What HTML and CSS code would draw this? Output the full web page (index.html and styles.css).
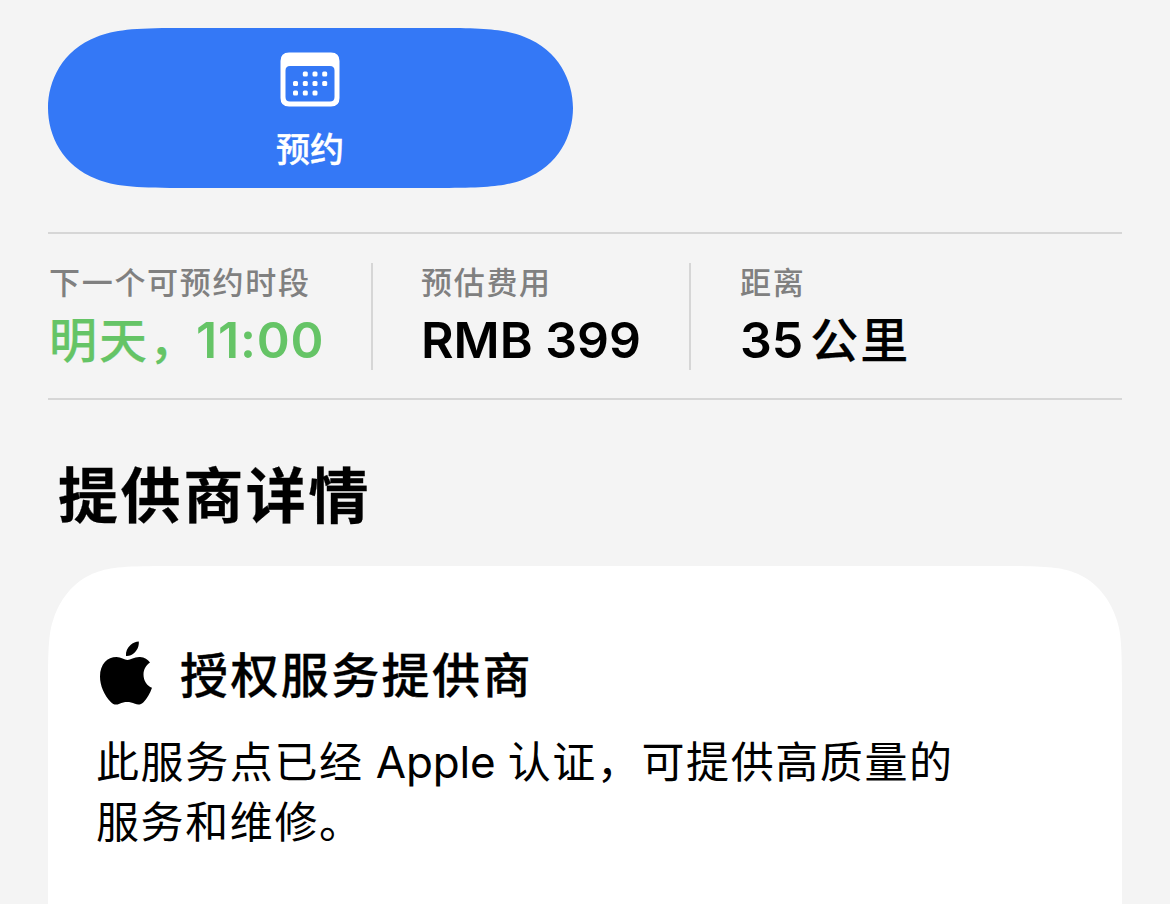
FILE: index.html
```html
<!DOCTYPE html>
<html lang="zh-CN">
<head>
  <meta charset="UTF-8">
  <meta name="viewport" content="width=device-width, initial-scale=1.0">
  <title>授权服务提供商</title>
  <link rel="stylesheet" href="styles.css">
</head>
<body>

  <main class="container">
    <button type="button" class="btn">
      <svg class="calendar-icon" width="60" height="56" viewBox="0 0 60 56">
        <path fill="#fff" fill-rule="evenodd" d="M9 0.5H51Q59.5 0.5 59.5 9V46Q59.5 54.5 51 54.5H9Q0.5 54.5 0.5 46V9Q0.5 0.5 9 0.5ZM10 14Q5.5 14 5.5 18.5V45Q5.5 49.5 10 49.5H50Q54.500 49.5 54.500 45V18.5Q54.500 14 50 14Z"/>
        <g fill="#fff">
          <rect x="22.800" y="19.500" width="5" height="5" rx="1.500"/>
          <rect x="32.500" y="19.500" width="5" height="5" rx="1.500"/>
          <rect x="42.200" y="19.500" width="5" height="5" rx="1.500"/>
          <rect x="13" y="29" width="5" height="5" rx="1.500"/>
          <rect x="22.800" y="29" width="5" height="5" rx="1.500"/>
          <rect x="32.500" y="29" width="5" height="5" rx="1.500"/>
          <rect x="42.200" y="29" width="5" height="5" rx="1.500"/>
          <rect x="13" y="38.500" width="5" height="5" rx="1.500"/>
          <rect x="22.800" y="38.500" width="5" height="5" rx="1.500"/>
          <rect x="32.500" y="38.500" width="5" height="5" rx="1.500"/>
        </g>
      </svg>
      <span>预约</span>
    </button>

    <section class="info">
      <div class="info-item">
        <p class="info-label">下一个可预约时段</p>
        <p class="info-value available">明天<span class="comma">，</span><span class="latin time">11:00</span></p>
      </div>
      <div class="info-item">
        <p class="info-label">预估费用</p>
        <p class="info-value"><span class="latin">RMB 399</span></p>
      </div>
      <div class="info-item">
        <p class="info-label">距离</p>
        <p class="info-value"><span class="latin distance">35</span>公里</p>
      </div>
    </section>

    <h2>提供商详情</h2>

    <section class="card">
      <div class="card-title">
        <svg class="apple-logo" width="54" height="64" viewBox="0 0 54 64">
          <path d="M38.800 0.500C39.200 5.500 37 9.500 34.200 12C31.800 14.200 29 15.300 26 15C25.500 10.500 27.500 6.800 30.500 4C32.800 1.900 36 0.600 38.800 0.500Z"/>
          <path d="M50 21.500C46.200 24.200 43.500 28.200 43.500 33.500C43.500 40 47 44.700 52 46.800C50 52.500 47 57.500 43.500 61.200C41 63.700 38 64 35 62.800C29.500 60.300 24.500 60.500 19.500 62.700C16 64.200 13.500 63.800 11 61.200C4 54 0 44.500 0 35.500C0 23 7.500 16 16.500 16C21 16 24.500 18.900 27.500 18.900C30.500 18.900 34.500 15.700 40 16C44.500 16.200 48 18.500 50 21.500Z"/>
        </svg>
        <h3>授权服务提供商</h3>
      </div>
      <p class="card-text">此服务点已经 <span class="latin">Apple</span> 认证，可提供高质量的<br>服务和维修。</p>
    </section>
  </main>

</body>
</html>
```

FILE: styles.css
```css
* {
  margin: 0;
  padding: 0;
  box-sizing: border-box;
}

body {
  font-family: "Noto Sans CJK SC", sans-serif;
  background-color: #f4f4f4;
  color: #000;
}

.container {
  width: 1074px;
  margin: 0 auto;
  padding-top: 28px;
}

.btn {
  display: flex;
  flex-direction: column;
  align-items: center;
  width: 525px;
  height: 160px;
  padding: 24px 1px 0 0;
  border: none;
  background-color: #3478f6;
  color: #fff;
  font-family: "Noto Sans CJK SC", sans-serif;
  font-size: 34px;
  font-weight: 500;
  line-height: 50px;
  clip-path: path("M0 80C0 53 14 22 49 8.700C66 2 85 0 130 0H395C440 0 459 2 476 8.700C511 22 525 53 525 80C525 107 511 138 476 151.300C459 158 440 160 395 160H130C85 160 66 158 49 151.300C14 138 0 107 0 80Z");
  cursor: pointer;
}

.btn span {
  margin-top: 15px;
  -webkit-text-stroke: 0.4px #fff;
}

.info {
  display: flex;
  height: 168px;
  margin-top: 44px;
  padding: 29px 0 28px;
  border-top: 2px solid #d6d6d6;
  border-bottom: 2px solid #d6d6d6;
}

.info-item {
  height: 107px;
  padding: 0 49px;
  border-right: 2px solid #d6d6d6;
}

.info-item:first-child {
  width: 325px;
  padding-left: 1px;
}

.info-item:nth-child(2) {
  width: 318px;
  padding-left: 48px;
}

.info-item:last-child {
  border-right: none;
}

.info-label {
  font-size: 31px;
  font-weight: 500;
  line-height: 36px;
  letter-spacing: 1.7px;
  color: #808080;
  white-space: nowrap;
}

.info-value {
  font-size: 48px;
  font-weight: 500;
  line-height: 76px;
  letter-spacing: 2px;
  white-space: nowrap;
  -webkit-text-stroke: 0.2px currentColor;
}

.latin {
  font-family: Inter, sans-serif;
  line-height: 1;
}

.info-value .latin {
  font-size: 50px;
  font-weight: 600;
  letter-spacing: 0;
  -webkit-text-stroke: 0;
}

.info-value .time {
  letter-spacing: 0.8px;
}

.info-value .distance {
  margin-right: 7px;
}

.comma {
  letter-spacing: -1px;
}

.available {
  color: #65c466;
}

h2 {
  margin: 48px 0 0 10px;
  font-size: 60px;
  font-weight: 700;
  line-height: 88px;
  letter-spacing: 2.6px;
  -webkit-text-stroke: 0.3px #000;
}

.card {
  height: 338px;
  margin-top: 30px;
  padding: 74px 48px 0;
  background-color: #fff;
  clip-path: path("M0 120C0 80 1 66 5.500 53C13 30 29 13 48 6.500C62 1 80 0 120 0H954C994 0 1012 1 1026 6.500C1045 13 1061 30 1068.500 53C1073 66 1074 80 1074 120V338H0Z");
}

.card-title {
  display: flex;
  align-items: center;
  gap: 26px;
  height: 66px;
  padding-left: 4px;
}

h3 {
  padding-bottom: 2px;
  font-size: 48px;
  font-weight: 500;
  line-height: 64px;
  letter-spacing: 2.4px;
  -webkit-text-stroke: 0.3px #000;
}

.card-text {
  margin-top: 23px;
  font-size: 43px;
  font-weight: 400;
  line-height: 60px;
  letter-spacing: 1.6px;
}

.card-text .latin {
  margin: 0 1px;
  font-size: 44px;
  letter-spacing: -0.2px;
}
```
